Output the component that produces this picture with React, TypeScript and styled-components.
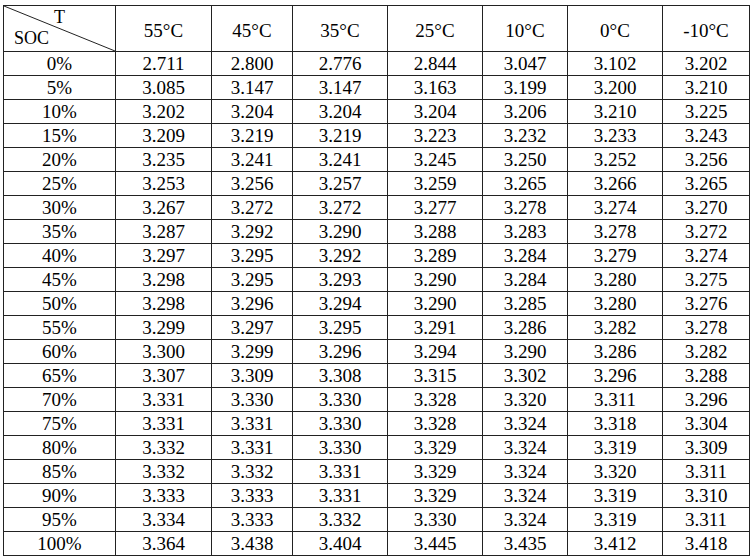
import styled, { createGlobalStyle } from "styled-components";

const GlobalStyle = createGlobalStyle`
  html, body {
    margin: 0;
    padding: 0;
    background: #ffffff;
  }
`;

const Page = styled.div`
  padding: 5px 0 0 3px;
  font-family: "Liberation Serif", "Times New Roman", serif;
  color: #000;
`;

const Table = styled.table`
  border-collapse: collapse;
  table-layout: fixed;
  width: 747px;
  border: 1px solid #222;
`;

const HeadCell = styled.th`
  height: 41px;
  padding: 4px 0 0;
  border: 1px solid #222;
  font-weight: normal;
  font-size: 19px;
  text-align: center;
`;

const CornerCell = styled.th`
  position: relative;
  height: 45px;
  padding: 0;
  border: 1px solid #222;
  font-weight: normal;
  font-size: 18px;
`;

const CornerInner = styled.div`
  display: flex;
  flex-direction: column;
  height: 45px;
  padding: 1px 0 0;
  box-sizing: border-box;
`;

const CornerT = styled.span`
  align-self: center;
  line-height: 20px;
`;

const CornerSoc = styled.span`
  align-self: flex-start;
  padding-left: 10px;
  line-height: 22px;
`;

const Diagonal = styled.svg`
  position: absolute;
  inset: 0;
  width: 100%;
  height: 100%;
`;

const Cell = styled.td`
  height: 22px;
  padding: 1px 0 0;
  border: 1px solid #222;
  font-size: 19px;
  line-height: 20px;
  text-align: center;
`;

const widths = [112, 96, 81, 95, 95, 85, 95, 87];
const temps = ["55°C", "45°C", "35°C", "25°C", "10°C", "0°C", "-10°C"];

const rows: [string, string[]][] = [
  ["0%", ["2.711", "2.800", "2.776", "2.844", "3.047", "3.102", "3.202"]],
  ["5%", ["3.085", "3.147", "3.147", "3.163", "3.199", "3.200", "3.210"]],
  ["10%", ["3.202", "3.204", "3.204", "3.204", "3.206", "3.210", "3.225"]],
  ["15%", ["3.209", "3.219", "3.219", "3.223", "3.232", "3.233", "3.243"]],
  ["20%", ["3.235", "3.241", "3.241", "3.245", "3.250", "3.252", "3.256"]],
  ["25%", ["3.253", "3.256", "3.257", "3.259", "3.265", "3.266", "3.265"]],
  ["30%", ["3.267", "3.272", "3.272", "3.277", "3.278", "3.274", "3.270"]],
  ["35%", ["3.287", "3.292", "3.290", "3.288", "3.283", "3.278", "3.272"]],
  ["40%", ["3.297", "3.295", "3.292", "3.289", "3.284", "3.279", "3.274"]],
  ["45%", ["3.298", "3.295", "3.293", "3.290", "3.284", "3.280", "3.275"]],
  ["50%", ["3.298", "3.296", "3.294", "3.290", "3.285", "3.280", "3.276"]],
  ["55%", ["3.299", "3.297", "3.295", "3.291", "3.286", "3.282", "3.278"]],
  ["60%", ["3.300", "3.299", "3.296", "3.294", "3.290", "3.286", "3.282"]],
  ["65%", ["3.307", "3.309", "3.308", "3.315", "3.302", "3.296", "3.288"]],
  ["70%", ["3.331", "3.330", "3.330", "3.328", "3.320", "3.311", "3.296"]],
  ["75%", ["3.331", "3.331", "3.330", "3.328", "3.324", "3.318", "3.304"]],
  ["80%", ["3.332", "3.331", "3.330", "3.329", "3.324", "3.319", "3.309"]],
  ["85%", ["3.332", "3.332", "3.331", "3.329", "3.324", "3.320", "3.311"]],
  ["90%", ["3.333", "3.333", "3.331", "3.329", "3.324", "3.319", "3.310"]],
  ["95%", ["3.334", "3.333", "3.332", "3.330", "3.324", "3.319", "3.311"]],
  ["100%", ["3.364", "3.438", "3.404", "3.445", "3.435", "3.412", "3.418"]],
];

export default function App() {
  return (
    <Page>
      <GlobalStyle />
      <Table>
        <colgroup>
          {widths.map((w, i) => (
            <col key={i} style={{ width: w }} />
          ))}
        </colgroup>
        <thead>
          <tr>
            <CornerCell>
              <Diagonal preserveAspectRatio="none" viewBox="0 0 100 100">
                <line x1="0" y1="0" x2="100" y2="100" stroke="#222" strokeWidth="1" vectorEffect="non-scaling-stroke" />
              </Diagonal>
              <CornerInner>
                <CornerT>T</CornerT>
                <CornerSoc>SOC</CornerSoc>
              </CornerInner>
            </CornerCell>
            {temps.map((t) => (
              <HeadCell key={t}>{t}</HeadCell>
            ))}
          </tr>
        </thead>
        <tbody>
          {rows.map(([soc, vals]) => (
            <tr key={soc}>
              <Cell>{soc}</Cell>
              {vals.map((v, i) => (
                <Cell key={i}>{v}</Cell>
              ))}
            </tr>
          ))}
        </tbody>
      </Table>
    </Page>
  );
}
